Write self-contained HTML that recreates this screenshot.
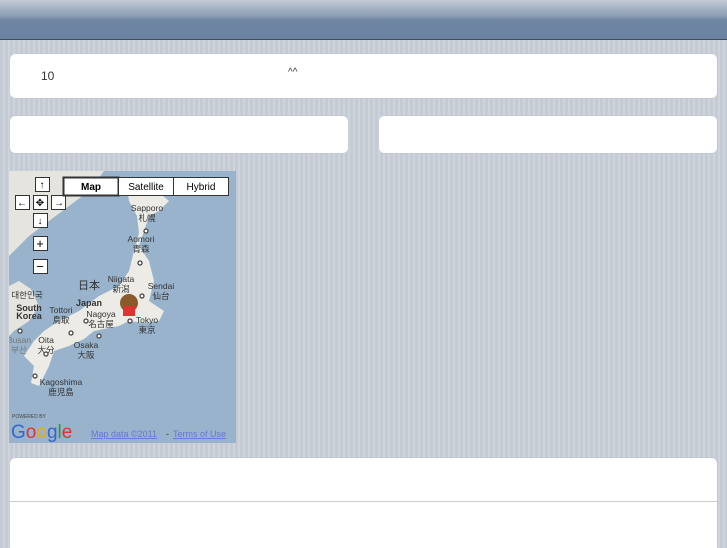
<!DOCTYPE html>
<html><head><style>
*{margin:0;padding:0;box-sizing:border-box}
body{width:727px;height:545px;overflow:hidden;position:relative;font-family:"Liberation Sans","Noto Sans CJK JP",sans-serif;
background:repeating-linear-gradient(90deg,#c5cbd4 0 3px,#cfd4db 3px 5px);}
.hd{position:absolute;left:0;top:0;width:727px;height:40px;background:linear-gradient(#c3cad4 0,#a6b3c5 8px,#8c9db5 16px,#6f86a3 20px,#6b82a0 38px);border-bottom:1px solid #3d4d63}
.p{position:absolute;background:#fff;border-radius:5px;box-shadow:0 0 1px #aab}
.t{position:absolute;font-size:12px;color:#333}
</style></head><body>
<div class="hd"></div>
<div class="p" style="left:10px;top:54px;width:707px;height:44px"></div>
<div class="t" style="left:41px;top:69px">10</div>
<div class="t" style="left:288px;top:67px;font-size:10px">^^</div>
<div class="p" style="left:10px;top:116px;width:338px;height:37px"></div>
<div class="p" style="left:379px;top:116px;width:338px;height:37px"></div>
<div class="p" style="left:10px;top:458px;width:707px;height:90px;border-radius:5px 5px 0 0"></div>
<div style="position:absolute;left:10px;top:501px;width:707px;height:1px;background:#ccc"></div>
<svg style="position:absolute;left:9px;top:171px" width="227" height="272" viewBox="0 0 227 272" font-family="Liberation Sans,Noto Sans CJK JP,sans-serif">
<rect width="227" height="272" fill="#99b3cc"/>
<path d="M0 0H95L80 20 60 35 40 50 20 65 5 80 0 85Z" fill="#e6e4de"/>
<path d="M0 115L10 110 22 118 30 135 20 150 5 160 0 165Z" fill="#e6e4de"/>
<path d="M118 15 130 10 148 20 160 30 150 40 140 45 135 60 130 75 140 90 145 110 140 130 155 140 150 150 135 152 120 150 110 155 95 158 85 160 75 168 60 175 45 180 40 195 30 215 22 212 25 195 15 185 25 170 35 160 50 150 70 140 90 125 110 115 120 100 125 80 130 62 128 45 120 30Z" fill="#ecebe6"/>
<g font-size="8.5" fill="#333" text-anchor="middle">
<text x="138" y="40">Sapporo</text><text x="138" y="50">札幌</text>
<text x="132" y="71">Aomori</text><text x="132" y="81">青森</text>
<text x="112" y="111">Niigata</text><text x="112" y="121">新潟</text>
<text x="152" y="118">Sendai</text><text x="152" y="128">仙台</text>
<text x="18" y="127">대한민국</text>
<text x="20" y="140" font-weight="bold" font-size="9">South</text><text x="20" y="148" font-weight="bold" font-size="9">Korea</text>
<text x="52" y="142">Tottori</text><text x="52" y="152">鳥取</text>
<text x="80" y="118" font-size="11">日本</text>
<text x="80" y="135" font-weight="bold" font-size="9">Japan</text>
<text x="92" y="146">Nagoya</text><text x="92" y="156">名古屋</text>
<text x="138" y="152">Tokyo</text><text x="138" y="162">東京</text>
<text x="77" y="177">Osaka</text><text x="77" y="187">大阪</text>
<text x="37" y="172">Oita</text><text x="37" y="182">大分</text>
<text x="10" y="172" fill="#777">Busan</text><text x="10" y="182" fill="#777">부산</text>
<text x="52" y="214">Kagoshima</text><text x="52" y="224">鹿児島</text>
</g>
<g fill="#fff" stroke="#444" stroke-width="1.3"><circle cx="137" cy="60" r="2"/><circle cx="131" cy="92" r="2"/><circle cx="133" cy="125" r="2"/><circle cx="62" cy="162" r="2"/><circle cx="90" cy="165" r="2"/><circle cx="77" cy="150" r="2"/><circle cx="11" cy="160" r="2"/><circle cx="37" cy="183" r="2"/><circle cx="26" cy="205" r="2"/><circle cx="121" cy="150" r="2"/></g>
<circle cx="120" cy="132" r="9" fill="#8a5a2a"/><rect x="114" y="135" width="12" height="10" fill="#d33"/>
<g fill="#fff" stroke="#333"><rect x="26.5" y="6.5" width="14" height="14"/><rect x="6.5" y="24.5" width="14" height="14"/><rect x="24.5" y="24.5" width="14" height="14"/><rect x="42.5" y="24.5" width="14" height="14"/><rect x="24.5" y="42.5" width="14" height="14"/><rect x="24.5" y="65.5" width="14" height="14"/><rect x="24.5" y="88.5" width="14" height="14"/>
<rect x="54.5" y="6.5" width="55" height="18" stroke-width="2"/><rect x="109.5" y="6.5" width="55" height="18"/><rect x="164.5" y="6.5" width="55" height="18"/></g>
<g font-size="10" text-anchor="middle" fill="#000"><text x="82" y="19" font-weight="bold">Map</text><text x="137" y="19">Satellite</text><text x="192" y="19">Hybrid</text>
<text x="33" y="17">↑</text><text x="13" y="35">←</text><text x="31" y="35">✥</text><text x="50" y="35">→</text><text x="31" y="53">↓</text><text x="31" y="77" font-size="13">+</text><text x="31" y="100" font-size="13">−</text></g>
<text x="3" y="247" font-size="5" fill="#444">POWERED BY</text>
<text x="2" y="267" font-size="19" fill="#3366cc">G<tspan fill="#d33">o</tspan><tspan fill="#e8b000">o</tspan>g<tspan fill="#393">l</tspan><tspan fill="#d33">e</tspan></text>
<text x="82" y="266" font-size="9" fill="#6677cc" text-decoration="underline">Map data ©2011 </text><text x="157" y="266" font-size="9" fill="#333">-</text><text x="164" y="266" font-size="9" fill="#6677cc" text-decoration="underline">Terms of Use</text>
</svg>
</body></html>
